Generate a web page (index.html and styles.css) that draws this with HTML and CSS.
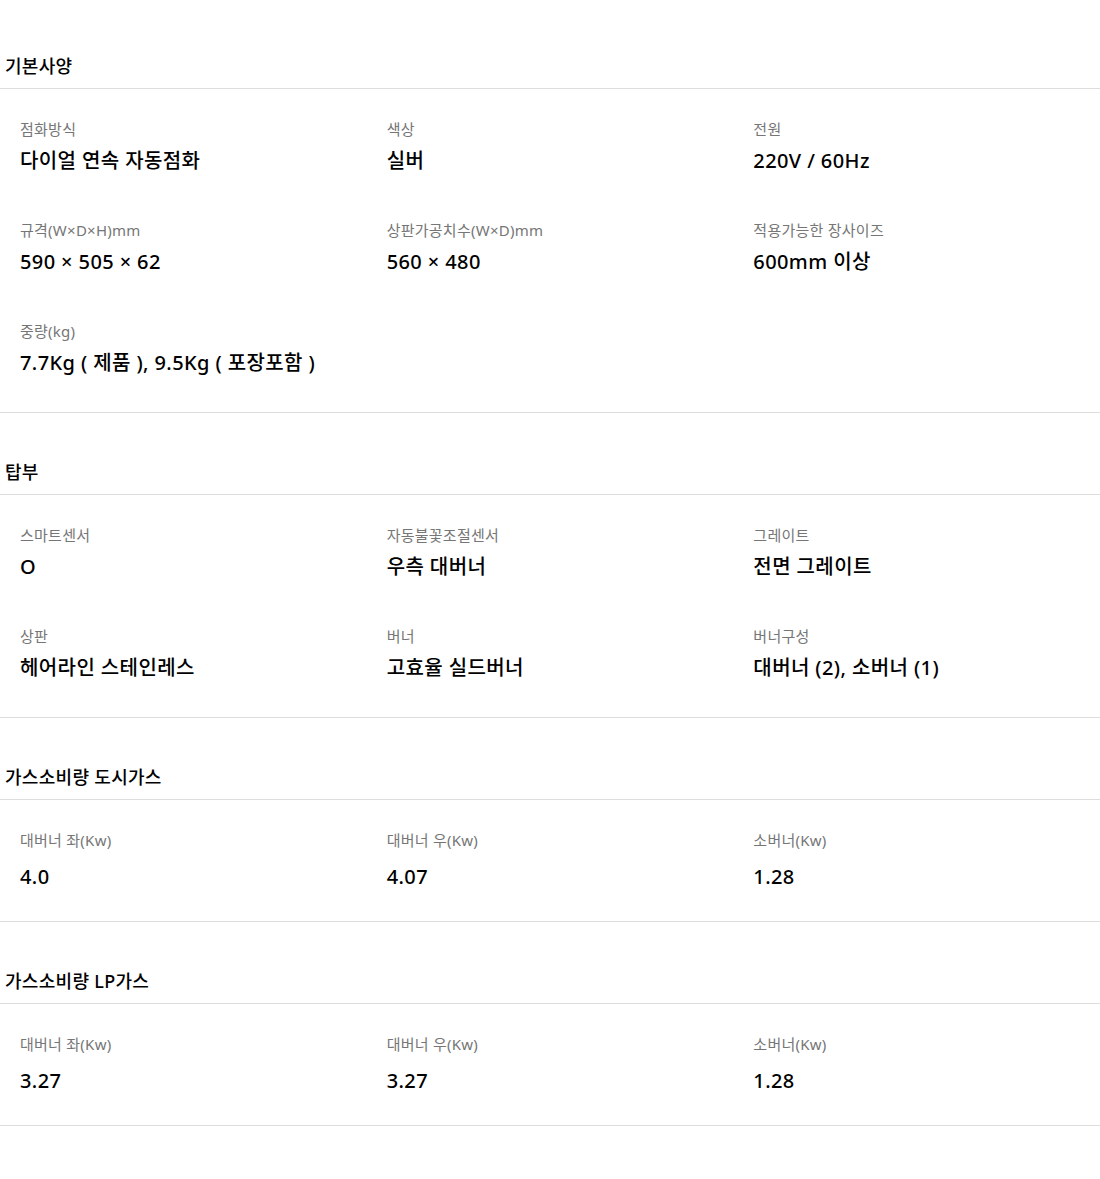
FILE: index.html
```html
<!DOCTYPE html>
<html lang="ko">
<head>
<meta charset="utf-8">
<title>스펙</title>
<link rel="stylesheet" href="styles.css">
</head>
<body>
<div class="spec">
  <section class="group">
    <h3 class="group-title">기본사양</h3>
    <ul class="grid">
      <li class="item"><p class="label">점화방식</p><p class="value">다이얼 연속 자동점화</p></li>
      <li class="item"><p class="label">색상</p><p class="value">실버</p></li>
      <li class="item"><p class="label">전원</p><p class="value">220V / 60Hz</p></li>
      <li class="item"><p class="label">규격(W×D×H)mm</p><p class="value">590 × 505 × 62</p></li>
      <li class="item"><p class="label">상판가공치수(W×D)mm</p><p class="value">560 × 480</p></li>
      <li class="item"><p class="label">적용가능한 장사이즈</p><p class="value">600mm 이상</p></li>
      <li class="item"><p class="label">중량(kg)</p><p class="value">7.7Kg ( 제품 ), 9.5Kg ( 포장포함 )</p></li>
    </ul>
  </section>
  <section class="group">
    <h3 class="group-title">탑부</h3>
    <ul class="grid">
      <li class="item"><p class="label">스마트센서</p><p class="value">O</p></li>
      <li class="item"><p class="label">자동불꽃조절센서</p><p class="value">우측 대버너</p></li>
      <li class="item"><p class="label">그레이트</p><p class="value">전면 그레이트</p></li>
      <li class="item"><p class="label">상판</p><p class="value">헤어라인 스테인레스</p></li>
      <li class="item"><p class="label">버너</p><p class="value">고효율 실드버너</p></li>
      <li class="item"><p class="label">버너구성</p><p class="value">대버너 (2), 소버너 (1)</p></li>
    </ul>
  </section>
  <section class="group">
    <h3 class="group-title">가스소비량 도시가스</h3>
    <ul class="grid grid-gas">
      <li class="item"><p class="label">대버너 좌(Kw)</p><p class="value">4.0</p></li>
      <li class="item"><p class="label">대버너 우(Kw)</p><p class="value">4.07</p></li>
      <li class="item"><p class="label">소버너(Kw)</p><p class="value">1.28</p></li>
    </ul>
  </section>
  <section class="group">
    <h3 class="group-title">가스소비량 LP가스</h3>
    <ul class="grid grid-gas">
      <li class="item"><p class="label">대버너 좌(Kw)</p><p class="value">3.27</p></li>
      <li class="item"><p class="label">대버너 우(Kw)</p><p class="value">3.27</p></li>
      <li class="item"><p class="label">소버너(Kw)</p><p class="value">1.28</p></li>
    </ul>
  </section>
</div>
</body>
</html>
```
FILE: styles.css
```css
* { box-sizing: border-box; }
html, body { margin: 0; padding: 0; background: #fff; }
body {
  font-family: "Noto Sans", "Noto Sans CJK KR", sans-serif;
  color: #000;
}
.spec { padding-top: 53px; }
.group + .group { margin-top: 46px; }
.group-title {
  margin: 0;
  padding: 0 0 9px 5px;
  font-size: 18px;
  line-height: 26px;
  font-weight: 500;
  letter-spacing: 0.3px;
  border-bottom: 1px solid #dddddd;
}
.grid {
  list-style: none;
  margin: 0;
  padding: 30px 0 35px;
  display: grid;
  grid-template-columns: repeat(3, 1fr);
  row-gap: 45px;
  border-bottom: 1px solid #dddddd;
}
.item { padding: 0 20px; }
.label {
  margin: 0 0 8px;
  font-size: 15px;
  line-height: 20px;
  color: #767676;
  letter-spacing: 0.25px;
}
.value {
  margin: 0;
  font-size: 20px;
  line-height: 28px;
  font-weight: 500;
  letter-spacing: 0.4px;
}
.grid-gas { padding-bottom: 30px; }
.grid-gas .label { margin-bottom: 13px; }
```
